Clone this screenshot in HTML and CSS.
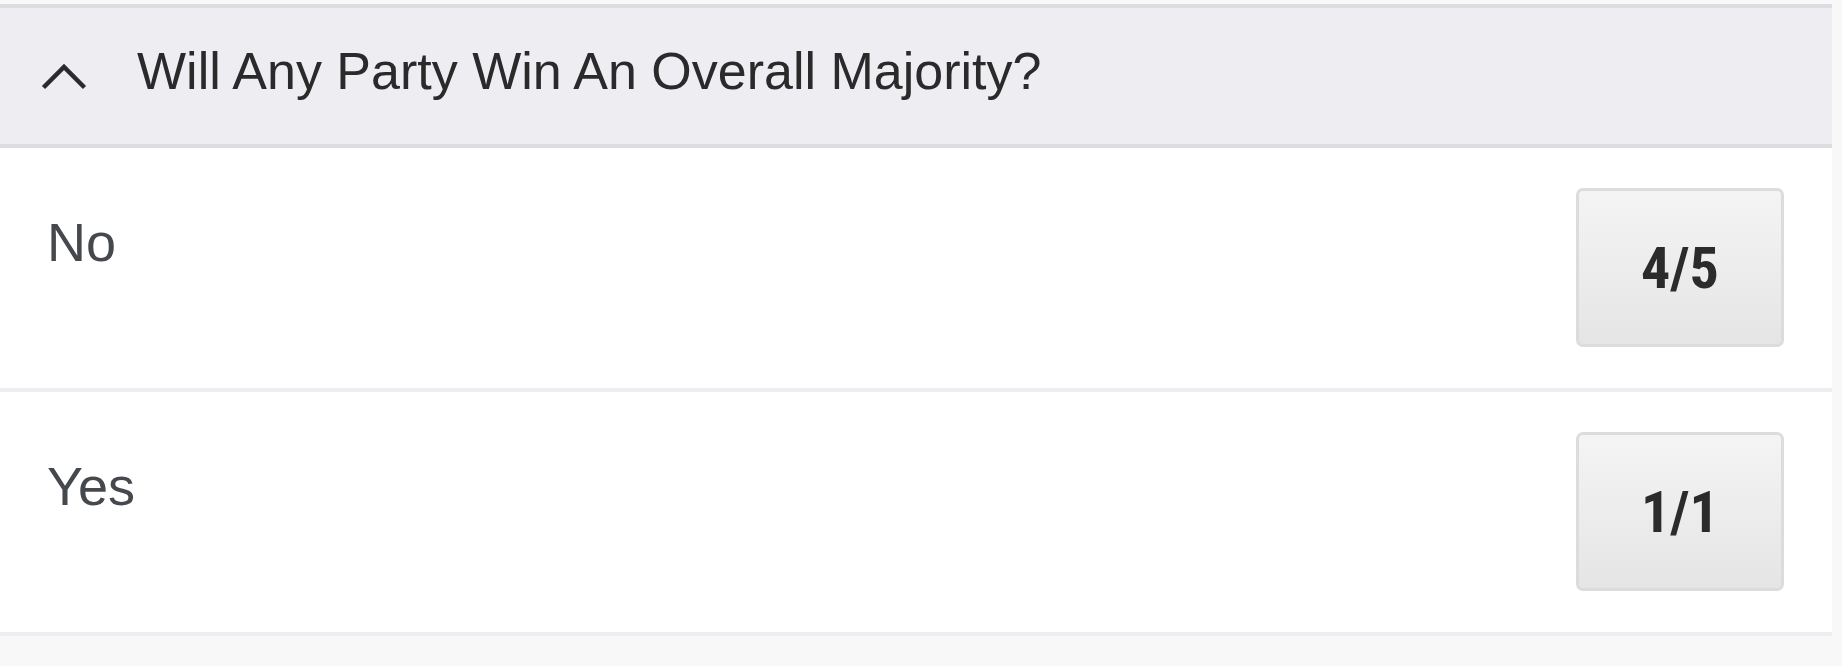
FILE: index.html
```html
<!DOCTYPE html>
<html lang="en">
<head>
  <meta charset="UTF-8">
  <title>Overall Majority</title>
  <link rel="stylesheet" href="styles.css">
</head>
<body>
  <div class="market">
    <div class="market-head">
      <svg class="chevron" width="48" height="30" viewBox="0 0 48 30">
        <polyline points="3.5,26.5 24,6 44.5,26.5" fill="none" stroke="#2b2b2b" stroke-width="4.5"/>
      </svg>
      <h2 class="market-title">Will Any Party Win An Overall Majority?</h2>
    </div>
    <div class="outcome">
      <span class="outcome-name">No</span>
      <button class="price">4/5</button>
    </div>
    <div class="outcome">
      <span class="outcome-name">Yes</span>
      <button class="price">1/1</button>
    </div>
  </div>
</body>
</html>
```

FILE: styles.css
```css
body {
  margin: 0;
  padding-top: 4px;
  background-color: #f8f8f8;
  font-family: "Liberation Sans", Arial, sans-serif;
}
.market {
  width: 1832px;
  background-color: #fff;
}
.market-head {
  display: flex;
  align-items: center;
  height: 136px;
  padding-left: 40px;
  background-color: #eeedf2;
  border-top: 4px solid #dddce1;
  border-bottom: 4px solid #dddce1;
}
.chevron {
  display: block;
  margin-right: 49px;
}
.market-title {
  margin: 0 0 10px;
  font-size: 52px;
  font-weight: normal;
  color: #2a2a2a;
}
.outcome {
  display: flex;
  justify-content: space-between;
  align-items: flex-start;
  padding: 40px 48px 41px 47px;
  border-bottom: 4px solid #eeedf2;
}
.outcome-name {
  padding-top: 22px;
  font-size: 54px;
  line-height: 1.2;
  color: #45494e;
}
.price {
  width: 208px;
  height: 159px;
  padding: 0;
  border: 3px solid #dcdcdc;
  border-radius: 7px;
  background: linear-gradient(#f4f4f4, #e5e5e5);
  font-family: "Liberation Sans Narrow", "Roboto Condensed", "DejaVu Sans Condensed", sans-serif;
  font-weight: bold;
  font-size: 58px;
  color: #2b2b2b;
  cursor: pointer;
}
```
